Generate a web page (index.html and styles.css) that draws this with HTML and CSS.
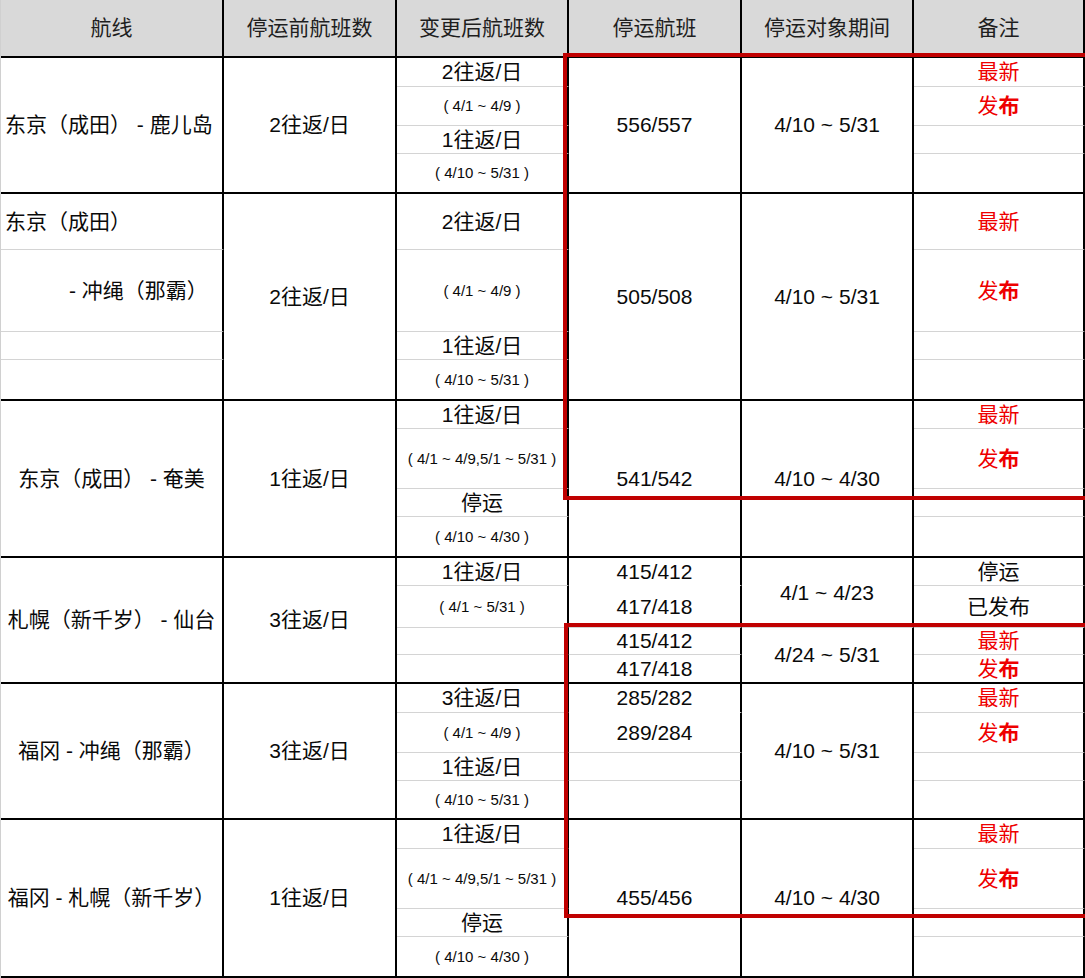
FILE: index.html
```html
<!DOCTYPE html>
<html lang="zh-CN">
<head>
<meta charset="utf-8">
<title>停运航班</title>
<link rel="stylesheet" href="styles.css">
</head>
<body>
<div class="sheet">
  <div class="grid">
    <div class="c hd">航线</div>
    <div class="c hd">停运前航班数</div>
    <div class="c hd">变更后航班数</div>
    <div class="c hd">停运航班</div>
    <div class="c hd">停运对象期间</div>
    <div class="c hd">备注</div>

    <!-- group 1 -->
    <div class="c s4 gb route r1">东京（成田） - 鹿儿岛</div>
    <div class="c s4 gb">2往返/日</div>
    <div class="c">2往返/日</div>
    <div class="c s4 gb">556/557</div>
    <div class="c s4 gb">4/10 ~ 5/31</div>
    <div class="c red">最新</div>
    <div class="c sm">( 4/1 ~ 4/9 )</div>
    <div class="c red">发<b>布</b></div>
    <div class="c">1往返/日</div>
    <div class="c"></div>
    <div class="c sm gb">( 4/10 ~ 5/31 )</div>
    <div class="c gb"></div>

    <!-- group 2 -->
    <div class="c route left">东京（成田）</div>
    <div class="c s4 gb">2往返/日</div>
    <div class="c">2往返/日</div>
    <div class="c s4 gb">505/508</div>
    <div class="c s4 gb">4/10 ~ 5/31</div>
    <div class="c red">最新</div>
    <div class="c route indent">- 冲绳（那霸）</div>
    <div class="c sm">( 4/1 ~ 4/9 )</div>
    <div class="c red">发<b>布</b></div>
    <div class="c"></div>
    <div class="c">1往返/日</div>
    <div class="c"></div>
    <div class="c gb"></div>
    <div class="c sm gb">( 4/10 ~ 5/31 )</div>
    <div class="c gb"></div>

    <!-- group 3 -->
    <div class="c s4 gb route">东京（成田） - 奄美</div>
    <div class="c s4 gb">1往返/日</div>
    <div class="c">1往返/日</div>
    <div class="c s4 gb">541/542</div>
    <div class="c s4 gb">4/10 ~ 4/30</div>
    <div class="c red">最新</div>
    <div class="c sm">( 4/1 ~ 4/9,5/1 ~ 5/31 )</div>
    <div class="c red">发<b>布</b></div>
    <div class="c">停运</div>
    <div class="c"></div>
    <div class="c sm gb">( 4/10 ~ 4/30 )</div>
    <div class="c gb"></div>

    <!-- group 4 -->
    <div class="c s4 gb route">札幌（新千岁） - 仙台</div>
    <div class="c s4 gb">3往返/日</div>
    <div class="c">1往返/日</div>
    <div class="c nb">415/412</div>
    <div class="c s2">4/1 ~ 4/23</div>
    <div class="c">停运</div>
    <div class="c sm">( 4/1 ~ 5/31 )</div>
    <div class="c">417/418</div>
    <div class="c">已发布</div>
    <div class="c"></div>
    <div class="c">415/412</div>
    <div class="c s2 gb">4/24 ~ 5/31</div>
    <div class="c red">最新</div>
    <div class="c gb"></div>
    <div class="c gb">417/418</div>
    <div class="c gb red">发<b>布</b></div>

    <!-- group 5 -->
    <div class="c s4 gb route">福冈 - 冲绳（那霸）</div>
    <div class="c s4 gb">3往返/日</div>
    <div class="c">3往返/日</div>
    <div class="c nb">285/282</div>
    <div class="c s4 gb">4/10 ~ 5/31</div>
    <div class="c red">最新</div>
    <div class="c sm">( 4/1 ~ 4/9 )</div>
    <div class="c">289/284</div>
    <div class="c red">发<b>布</b></div>
    <div class="c">1往返/日</div>
    <div class="c"></div>
    <div class="c"></div>
    <div class="c sm gb">( 4/10 ~ 5/31 )</div>
    <div class="c gb"></div>
    <div class="c gb"></div>

    <!-- group 6 -->
    <div class="c s4 gb route">福冈 - 札幌（新千岁）</div>
    <div class="c s4 gb">1往返/日</div>
    <div class="c">1往返/日</div>
    <div class="c s4 gb">455/456</div>
    <div class="c s4 gb">4/10 ~ 4/30</div>
    <div class="c red">最新</div>
    <div class="c sm">( 4/1 ~ 4/9,5/1 ~ 5/31 )</div>
    <div class="c red">发<b>布</b></div>
    <div class="c">停运</div>
    <div class="c"></div>
    <div class="c sm gb">( 4/10 ~ 4/30 )</div>
    <div class="c gb"></div>
  </div>

  <div class="hl hl-a"></div>
  <div class="hl hl-b"></div>
</div>
</body>
</html>
```

FILE: styles.css
```css
html, body {
  margin: 0;
  padding: 0;
  background: #ffffff;
}

.sheet {
  position: relative;
  width: 1085px;
  height: 978px;
  overflow: hidden;
  font-family: "Liberation Sans", "Noto Sans CJK SC", sans-serif;
  color: #0a0a0a;
}

.grid {
  display: grid;
  border-left: 1px solid #d0d0d0;
  grid-template-columns: 223px 173px 172px 173px 172px 171px;
  grid-template-rows:
    58px
    29px 39px 28px 40px
    56px 82px 28px 41px
    28px 60px 28px 41px
    28px 42px 27px 29px
    29px 40px 28px 39px
    29px 60px 28px 41px;
}

.c {
  box-sizing: border-box;
  display: flex;
  align-items: center;
  justify-content: center;
  border-right: 2px solid #000000;
  border-bottom: 1px solid #d4d4d4;
  font-size: 21px;
  line-height: 1.2;
  white-space: pre;
  text-align: center;
}

.hd {
  background: #d9d9d9;
  border-bottom: 2px solid #000000;
  color: #1e1e1e;
}

.gb {
  border-bottom: 2px solid #000000;
}

.nb {
  border-bottom-color: transparent;
}

.s2 { grid-row: span 2; }
.s4 { grid-row: span 4; }

.sm {
  font-size: 15px;
}

.left {
  justify-content: flex-start;
  padding-left: 4px;
}

.indent {
  justify-content: flex-start;
  padding-left: 68px;
}

.r1 {
  justify-content: flex-start;
  padding-left: 4px;
}

.red {
  color: #ee0000;
}

.red b {
  font-weight: 700;
}

.hl {
  position: absolute;
  box-sizing: border-box;
  border: 4px solid #c00000;
  pointer-events: none;
}

.hl-a {
  left: 563px;
  top: 53px;
  width: 540px;
  height: 447px;
}

.hl-b {
  left: 564px;
  top: 623px;
  width: 540px;
  height: 295px;
}
```
